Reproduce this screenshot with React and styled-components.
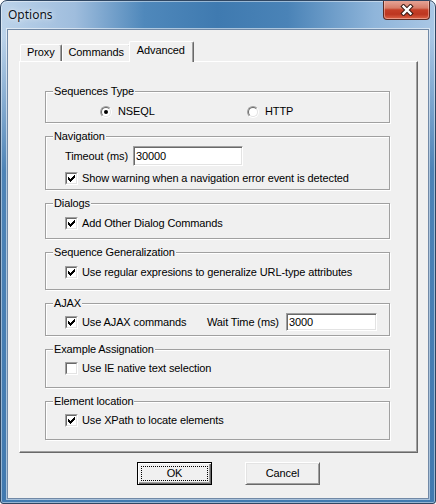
import React from 'react';
import styled, { createGlobalStyle } from 'styled-components';

const FACE = '#f0f0f0';
const SHADOW = '#a0a0a0';
const DARK = '#696969';
const LIGHT = '#e3e3e3';

const GlobalStyle = createGlobalStyle`
  html, body {
    margin: 0;
    padding: 0;
    background: #fff;
  }
  body {
    width: 436px;
    height: 504px;
    overflow: hidden;
    font-family: "Liberation Sans", Arial, sans-serif;
    font-size: 11px;
    letter-spacing: -0.12px;
    color: #000;
  }
`;

const Window = styled.div`
  box-sizing: border-box;
  width: 436px;
  height: 504px;
  display: flex;
  flex-direction: column;
  border: 1px solid #2f4662;
  border-radius: 7px 7px 3px 3px;
  overflow: hidden;
  background:
    linear-gradient(to bottom, rgba(66, 123, 177, 0) 0px, rgba(66, 123, 177, 0) 36px, rgba(66, 123, 177, 0.9) 170px, #4179af 100%),
    linear-gradient(to right, #bcd3ea 0%, #9fbddd 17%, #4f88bb 33%, #3f7ab0 50%, #4a83b7 66%, #8fb5da 86%, #aac7e5 100%);
  box-shadow: inset 0 0 0 1px rgba(255, 255, 255, 0.45);
`;

const TitleBar = styled.div`
  height: 28px;
  flex: none;
  display: flex;
  align-items: flex-start;
  padding-left: 7px;
`;

const Title = styled.span`
  margin-top: 6px;
  font-family: "Noto Sans", "Open Sans", sans-serif;
  font-size: 12px;
  letter-spacing: 0;
  line-height: 16px;
  color: #0b1320;
  text-shadow: 0 0 6px rgba(255, 255, 255, 0.9), 0 0 2px rgba(255, 255, 255, 0.7);
`;

const CloseButton = styled.div`
  box-sizing: border-box;
  margin: -1px 5px 0 auto;
  width: 47px;
  height: 20px;
  display: flex;
  align-items: center;
  justify-content: center;
  border: 1px solid #5b2a22;
  border-top: none;
  border-radius: 0 0 4px 4px;
  background: linear-gradient(to bottom, #e8a99c 0%, #d77d69 42%, #c53f27 52%, #bd3620 75%, #dc6447 100%);
  box-shadow: inset 0 0 0 1px rgba(255, 220, 210, 0.45);
`;

const Client = styled.div`
  flex: 1;
  display: flex;
  flex-direction: column;
  margin: 0 6px 4px 6px;
  padding: 11px 0 0 11px;
  background: ${FACE};
  border: 1px solid #7189a6;
  box-shadow: 0 0 0 1px rgba(255, 255, 255, 0.55);
`;

const TabStrip = styled.div`
  display: flex;
  align-items: flex-end;
  height: 20px;
  padding-left: 1px;
`;

const Tab = styled.div`
  position: relative;
  box-sizing: border-box;
  height: ${p => (p.$active ? '21px' : '17px')};
  margin: ${p => (p.$active ? '0 -2px -1px -2px' : '0')};
  padding: ${p => (p.$active ? '2px 8px 0 7px' : '1px 6px 0 6px')};
  z-index: ${p => (p.$active ? 1 : 0)};
  background: ${FACE};
  border-top: 1px solid #fff;
  border-left: 1px solid #fff;
  border-right: 1px solid ${DARK};
  border-radius: 2px 2px 0 0;
  box-shadow: inset -1px 0 0 ${SHADOW};
  line-height: 13px;
`;

const Panel = styled.div`
  box-sizing: border-box;
  width: 399px;
  height: 392px;
  display: flex;
  flex-direction: column;
  gap: 13px;
  padding: 29px 0 0 25px;
  border-top: 1px solid #fff;
  border-left: 1px solid #fff;
  border-right: 1px solid ${DARK};
  border-bottom: 1px solid ${DARK};
  box-shadow: inset -1px -1px 0 ${SHADOW};
`;

const Group = styled.div`
  box-sizing: border-box;
  width: 345px;
  height: ${p => p.$h}px;
  flex: none;
  display: flex;
  flex-direction: column;
  border: 1px solid ${SHADOW};
  box-shadow: inset 1px 1px 0 #fff, 1px 1px 0 #fff;
`;

const Legend = styled.div`
  align-self: flex-start;
  margin: -7px 0 0 7px;
  padding: 0 1px;
  line-height: 13px;
  background: ${FACE};
`;

const Row = styled.div`
  display: flex;
  align-items: center;
  margin-top: ${p => p.$mt}px;
  padding-left: ${p => p.$pl ?? 19}px;
  min-height: 13px;
`;

const Item = styled.label`
  display: flex;
  align-items: center;
  gap: ${p => p.$gap ?? 4}px;
  width: ${p => (p.$w ? `${p.$w}px` : 'auto')};
  flex: none;
  line-height: 13px;
  white-space: nowrap;
`;

const Label = styled.span`
  width: ${p => p.$w}px;
  flex: none;
  line-height: 13px;
  white-space: nowrap;
`;

const Box = styled.span`
  box-sizing: border-box;
  width: 13px;
  height: 13px;
  flex: none;
  display: flex;
  border: 1px solid;
  border-color: ${SHADOW} #fff #fff ${SHADOW};
`;

const BoxInner = styled.span`
  flex: 1;
  display: flex;
  align-items: center;
  justify-content: center;
  background: #fff;
  border: 1px solid;
  border-color: ${DARK} ${LIGHT} ${LIGHT} ${DARK};
`;

const RadioOuter = styled.span`
  box-sizing: border-box;
  width: 12px;
  height: 12px;
  flex: none;
  display: flex;
  border-radius: 50%;
  border: 1px solid;
  border-color: ${SHADOW} #fff #fff ${SHADOW};
`;

const RadioInner = styled.span`
  flex: 1;
  display: flex;
  align-items: center;
  justify-content: center;
  border-radius: 50%;
  background: #fff;
  border: 1px solid;
  border-color: ${DARK} ${LIGHT} ${LIGHT} ${DARK};
`;

const Dot = styled.span`
  width: 4px;
  height: 4px;
  border-radius: 50%;
  background: #000;
`;

const Input = styled.div`
  box-sizing: border-box;
  width: ${p => p.$w}px;
  height: ${p => p.$h}px;
  flex: none;
  display: flex;
  align-items: center;
  padding-left: 2px;
  background: #fff;
  border: 1px solid;
  border-color: ${SHADOW} #fff #fff ${SHADOW};
  box-shadow: inset 1px 1px 0 ${DARK}, inset -1px -1px 0 ${LIGHT};
  line-height: 13px;
`;

const ButtonRow = styled.div`
  display: flex;
  gap: 33px;
  margin-top: 9px;
  padding-left: 118px;
`;

const Button = styled.div`
  box-sizing: border-box;
  width: 75px;
  height: 23px;
  display: flex;
  align-items: center;
  justify-content: center;
  padding: ${p => (p.$default ? '3px' : '0')};
  background: ${FACE};
  border: 1px solid ${p => (p.$default ? '#000' : '#fff')};
  border-right-color: ${p => (p.$default ? '#000' : DARK)};
  border-bottom-color: ${p => (p.$default ? '#000' : DARK)};
  box-shadow: ${p =>
    p.$default
      ? `inset 1px 1px 0 #fff, inset -1px -1px 0 ${DARK}, inset -2px -2px 0 ${SHADOW}`
      : `inset 1px 1px 0 ${LIGHT}, inset -1px -1px 0 ${SHADOW}`};
  line-height: 13px;
`;

const Focus = styled.span`
  box-sizing: border-box;
  width: 100%;
  height: 100%;
  display: flex;
  align-items: center;
  justify-content: center;
  border: 1px dotted #000;
`;

function CheckMark() {
  const cols = [2, 3, 4, 3, 2, 1, 0];
  return (
    <svg width="7" height="7" viewBox="0 0 7 7" shapeRendering="crispEdges">
      {cols.map((y, x) => (
        <rect key={x} x={x} y={y} width="1" height="3" fill="#000" />
      ))}
    </svg>
  );
}

function Checkbox({ checked, children, w }) {
  return (
    <Item $w={w}>
      <Box>
        <BoxInner>{checked && <CheckMark />}</BoxInner>
      </Box>
      {children}
    </Item>
  );
}

function Radio({ checked, children, w }) {
  return (
    <Item $w={w} $gap={6}>
      <RadioOuter>
        <RadioInner>{checked && <Dot />}</RadioInner>
      </RadioOuter>
      {children}
    </Item>
  );
}

function CloseGlyph() {
  return (
    <svg width="14" height="12" viewBox="0 0 14 12">
      <path d="M3.5 2.5 L10.5 9.5 M10.5 2.5 L3.5 9.5" stroke="#3b1c16" strokeWidth="4.4" strokeLinecap="square" />
      <path d="M3.5 2.5 L10.5 9.5 M10.5 2.5 L3.5 9.5" stroke="#fff" strokeWidth="2.4" strokeLinecap="square" />
    </svg>
  );
}

export default function App() {
  return (
    <>
      <GlobalStyle />
      <Window>
        <TitleBar>
          <Title>Options</Title>
          <CloseButton>
            <CloseGlyph />
          </CloseButton>
        </TitleBar>
        <Client>
          <TabStrip>
            <Tab>Proxy</Tab>
            <Tab>Commands</Tab>
            <Tab $active>Advanced</Tab>
          </TabStrip>
          <Panel>
            <Group $h={32}>
              <Legend>Sequences Type</Legend>
              <Row $mt={7} $pl={54}>
                <Radio checked w={147}>NSEQL</Radio>
                <Radio>HTTP</Radio>
              </Row>
            </Group>

            <Group $h={54}>
              <Legend>Navigation</Legend>
              <Row $mt={3}>
                <Label $w={68}>Timeout (ms)</Label>
                <Input $w={110} $h={20}>30000</Input>
              </Row>
              <Row $mt={6}>
                <Checkbox checked>Show warning when a navigation error event is detected</Checkbox>
              </Row>
            </Group>

            <Group $h={36}>
              <Legend>Dialogs</Legend>
              <Row $mt={7}>
                <Checkbox checked>Add Other Dialog Commands</Checkbox>
              </Row>
            </Group>

            <Group $h={38}>
              <Legend>Sequence Generalization</Legend>
              <Row $mt={7}>
                <Checkbox checked>Use regular expresions to generalize URL-type attributes</Checkbox>
              </Row>
            </Group>

            <Group $h={33}>
              <Legend>AJAX</Legend>
              <Row $mt={3}>
                <Checkbox checked w={142}>Use AJAX commands</Checkbox>
                <Label $w={79}>Wait Time (ms)</Label>
                <Input $w={91} $h={18}>3000</Input>
              </Row>
            </Group>

            <Group $h={39}>
              <Legend>Example Assignation</Legend>
              <Row $mt={6}>
                <Checkbox>Use IE native text selection</Checkbox>
              </Row>
            </Group>

            <Group $h={39}>
              <Legend>Element location</Legend>
              <Row $mt={6}>
                <Checkbox checked>Use XPath to locate elements</Checkbox>
              </Row>
            </Group>
          </Panel>
          <ButtonRow>
            <Button $default>
              <Focus>OK</Focus>
            </Button>
            <Button>Cancel</Button>
          </ButtonRow>
        </Client>
      </Window>
    </>
  );
}
